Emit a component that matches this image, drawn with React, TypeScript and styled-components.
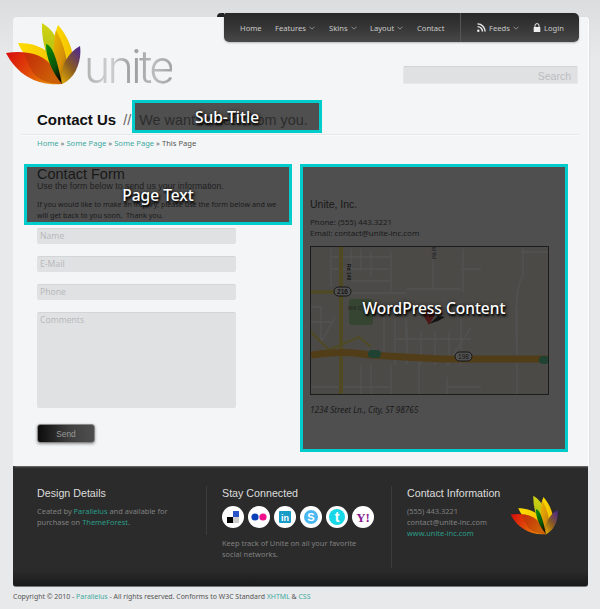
import React from "react";
import styled, { createGlobalStyle } from "styled-components";

const BODY = `"Noto Sans", "Open Sans", sans-serif`;
const HEAD = `"Liberation Sans", Arial, sans-serif`;

const Global = createGlobalStyle`
  html, body { margin: 0; padding: 0; }
  body { background: linear-gradient(#dcddde 0, #e8e9eb 60px); font-family: ${BODY}; width: 600px; height: 609px; overflow: hidden; }
  * { box-sizing: border-box; }
`;

const Page = styled.div`
  width: 575px;
  margin-left: 13px;
  padding-top: 17px;
`;
const Card = styled.main`
  position: relative;
  height: 449px;
  background: #f4f5f7;
  border-radius: 4px 4px 0 0;
  box-shadow: 1px 0 0 #fff, 2px 0 2px #dcdde0;
  display: flex;
  flex-direction: column;
`;
const NavBar = styled.nav`
  position: absolute;
  top: -4px;
  left: 211px;
  width: 355px;
  height: 29px;
  border-radius: 2px 5px 5px 5px;
  background: linear-gradient(#282828 0, #363636 50%, #484848 100%);
  box-shadow: 0 1px 2px rgba(0,0,0,.25);
  display: flex;
  align-items: center;
  padding-left: 16px;
  &::before {
    content: "";
    position: absolute;
    left: -7px;
    top: 0;
    width: 7px;
    height: 4px;
    background: #222;
    border-radius: 4px 0 0 0;
  }
`;
const NavItem = styled.a<{ $w: number }>`
  display: inline-flex;
  align-items: center;
  gap: 3px;
  width: ${p => p.$w}px;
  font-size: 7.6px;
  color: #c9c9c9;
  white-space: nowrap;
`;
const NavDivider = styled.span`
  width: 1px;
  height: 29px;
  background: #555;
  margin-right: 16px;
`;
const Chevron = () => (
  <svg width="6" height="4" viewBox="0 0 6 4"><path d="M.5.7 3 3.2 5.5.7" fill="none" stroke="#999" strokeWidth=".9" /></svg>
);
const Rss = () => (
  <svg width="9" height="9" viewBox="0 0 9 9">
    <circle cx="1.3" cy="7.7" r="1.2" fill="#eee" />
    <path d="M.5 3.6a5 5 0 0 1 5 5M.5 .9a7.7 7.7 0 0 1 7.7 7.7" fill="none" stroke="#eee" strokeWidth="1.4" />
  </svg>
);
const Lock = () => (
  <svg width="8" height="9" viewBox="0 0 8 9">
    <path d="M2 4V2.6a2 2 0 0 1 4 0V4" fill="none" stroke="#eee" strokeWidth="1" />
    <rect x=".7" y="4" width="6.6" height="5" rx=".6" fill="#eee" />
  </svg>
);

const Header = styled.header`
  height: 88px;
  flex: none;
  display: flex;
  justify-content: space-between;
  padding-right: 10px;
`;
const Brand = styled.div`
  display: flex;
  align-items: flex-start;
  margin-left: -8px;
  padding-top: 5px;
`;
const Wordmark = styled.span`
  font-family: Inter, "Liberation Sans", sans-serif;
  font-weight: 300;
  font-size: 44.5px;
  letter-spacing: -2.6px;
  line-height: 1;
  margin: 23px 0 0 3px;
  background: linear-gradient(90deg, #b0b0b0, #d0d0d0 30%, #9c9c9c 55%, #bcbcbc 80%, #a4a4a4);
  -webkit-background-clip: text;
  background-clip: text;
  color: transparent;
`;
const Search = styled.div`
  width: 175px;
  height: 18px;
  margin-top: 49px;
  background: #e0e1e3;
  border: 1px solid #e6e7e9;
  border-top-color: #d2d3d5;
  border-radius: 2px;
  font-family: ${HEAD};
  font-size: 10.5px;
  line-height: 18px;
  color: #bcbdbf;
  text-align: right;
  padding-right: 6px;
`;

const Logo = ({ width }: { width: number }) => (
  <svg width={width} height={width * 0.87} viewBox="5 22 76 66" aria-hidden="true">
    <defs>
      <linearGradient id="r" x1="0" x2="1" y1="0" y2=".4"><stop offset="0" stopColor="#d80c0c" /><stop offset=".55" stopColor="#e04808" /><stop offset="1" stopColor="#e88808" /></linearGradient>
      <linearGradient id="y" x1="0" x2="1"><stop offset="0" stopColor="#ffdc00" /><stop offset="1" stopColor="#f0c000" /></linearGradient>
      <linearGradient id="g" x1="0" x2="0" y1="0" y2="1"><stop offset="0" stopColor="#d4d414" /><stop offset="1" stopColor="#90b010" /></linearGradient>
      <linearGradient id="t" x1="0" x2="1" y1="0" y2="1"><stop offset="0" stopColor="#e8b800" /><stop offset=".6" stopColor="#d89008" /><stop offset="1" stopColor="#806010" /></linearGradient>
      <linearGradient id="p" x1=".8" x2=".2" y1="0" y2="1"><stop offset="0" stopColor="#502a8a" /><stop offset=".55" stopColor="#8a5c20" /><stop offset="1" stopColor="#d8a008" /></linearGradient>
      <linearGradient id="d" x1="0" x2=".5" y1="0" y2="1"><stop offset="0" stopColor="#0a8c0a" /><stop offset=".7" stopColor="#085008" /><stop offset="1" stopColor="#101000" /></linearGradient>
    </defs>
    <path d="M18 43C32 43 46 47 53 58L62 84C44 74 26 62 18 43Z" fill="url(#y)" />
    <path d="M42 23C52 29 58 38 60 50L62 84C50 68 41 45 42 23Z" fill="url(#g)" />
    <path d="M58 25C66 34 72 46 73 58C73 70 68 80 62 84C54 70 50 44 58 25Z" fill="url(#y)" />
    <path d="M56 30C52 46 52 66 62 84C68 72 70 56 56 30Z" fill="url(#t)" />
    <path d="M6 53C26 50 44 54 54 68L62 84C38 86 18 76 6 53Z" fill="url(#r)" />
    <path d="M24 53C40 53 52 62 62 84C52 84 42 82 34 74C30 68 26 60 24 53Z" fill="#a83008" fillOpacity=".45" />
    <path d="M46 44C53 46 57 60 62 84C52 72 46 58 46 44Z" fill="url(#d)" />
    <path d="M80 46C82 60 76 78 62 84C60 68 66 54 80 46Z" fill="url(#p)" />
  </svg>
);

const TitleRow = styled.div`
  height: 30px;
  flex: none;
  margin: 0 10px 0 9px;
  padding-left: 15px;
  display: flex;
  align-items: center;
  gap: 7px;
  border-bottom: 1px solid #e6e7e9;
  box-shadow: 0 1px 0 #fbfbfc;
`;
const PageTitle = styled.h1`
  margin: 0;
  font-family: ${HEAD};
  font-size: 15px;
  font-weight: 700;
  color: #111;
`;
const SubTitle = styled.span`
  font-family: ${HEAD};
  font-size: 14.4px;
  color: #666;
  white-space: nowrap;
`;
const Breadcrumb = styled.div`
  flex: none;
  padding: 2px 0 0 24px;
  height: 29px;
  font-size: 7.6px;
  line-height: 12px;
  color: #555;
`;
const Link = styled.a`
  color: #3eaaa0;
`;
const Columns = styled.div`
  position: relative;
  display: flex;
  padding-left: 24px;
  flex: 1;
`;
const FormColumn = styled.section`
  width: 273px;
  flex: none;
  padding-top: 3px;
`;
const SideColumn = styled.section`
  width: 240px;
  padding-top: 33px;
`;
const H2 = styled.h2`
  margin: 0;
  font-family: ${HEAD};
  font-size: 14.5px;
  font-weight: 400;
  line-height: 14px;
  color: #111;
`;
const Lead = styled.p`
  margin: 0 0 8px;
  font-family: ${HEAD};
  font-size: 8.8px;
  line-height: 10px;
  color: #333;
`;
const Para = styled.p`
  margin: 0 0 7px;
  width: 252px;
  font-size: 7.2px;
  line-height: 11px;
  color: #222;
`;
const Field = styled.div<{ $h?: number; $mb?: number }>`
  width: 199px;
  height: ${p => p.$h ?? 16}px;
  margin-bottom: ${p => p.$mb ?? 12}px;
  background: #e0e1e3;
  border-top: 1px solid #d4d5d7;
  border-radius: 2px;
  padding: 1px 3px;
  font-size: 8.6px;
  line-height: 13px;
  color: #b8b9bb;
`;
const SendButton = styled.button`
  display: block;
  width: 58px;
  height: 19px;
  padding: 0;
  border: 1px solid #888;
  border-radius: 3px;
  background: linear-gradient(90deg, #0c0c0c, #3e3e3e 55%, #4e4e4e);
  box-shadow: 0 1px 3px rgba(0,0,0,.4);
  font-family: ${HEAD};
  font-size: 8.4px;
  color: #9a9a9a;
`;
const SideName = styled.h3`
  margin: 0 0 6px;
  font-family: ${HEAD};
  font-size: 10.5px;
  font-weight: 400;
  line-height: 14px;
  color: #111;
`;
const SideLine = styled.p`
  margin: 0;
  font-size: 7.9px;
  line-height: 11px;
  color: #222;
`;
const Address = styled.p`
  margin: 9px 0 0;
  font-size: 8.2px;
  font-style: italic;
  line-height: 12px;
  color: #222;
`;
const MapFrame = styled.div`
  margin-top: 7px;
  width: 239px;
  height: 149px;
  border: 1px solid #222;
  overflow: hidden;
`;
const roads = [
  "M20 2V40M30 2V24M40 2V24M50 2V24M60 4V30M20 10H80M20 22H78M40 34H80M40 46H95M60 60H95M80 4V44M95 60V92M73 66V110",
  "M122 2V42M122 42H96M122 42H150M152 2V45M150 22H170M240 5H210M212 2V28C205 40 204 60 206 110M206 60V149",
  "M150 55C136 56 120 66 108 70M84 72V118M84 92H160M96 80V118M110 84V118M124 84V118M138 84V118M150 60V118M160 80L136 118",
  "M108 110V149M0 140H80M50 118V149M60 118V149M80 118V149M136 130V149M136 140H170M0 60H10V95L24 70M0 75H20",
];
const MapDrawing = () => (
  <svg width="237" height="147" viewBox="0 0 237 147" style={{ display: "block" }} role="img" aria-label="Street map">
    <rect width="237" height="147" fill="#e4e0d4" />
    <rect x="38" y="52" width="24" height="26" rx="3" fill="#8fce78" />
    <path d={roads.join("")} fill="none" stroke="#fff" strokeWidth="1.4" />
    <path d="M30 0V147" stroke="#f4e040" strokeWidth="4" fill="none" />
    <path d="M0 45H30" stroke="#f4e040" strokeWidth="3.5" fill="none" />
    <path d="M0 85L18 103 48 90 60 100" stroke="#f4e040" strokeWidth="2" fill="none" />
    <path d="M0 108C20 105 40 104 58 108L130 112H237" stroke="#ffaa10" strokeWidth="7" fill="none" />
    <rect x="57" y="103" width="13" height="8" rx="4" fill="#30c080" />
    <rect x="228" y="109" width="10" height="8" rx="4" fill="#30c080" />
    <rect x="144" y="105" width="17" height="9" rx="4.5" fill="#fff" stroke="#000" />
    <text x="152.5" y="112" fontSize="6.5" fontFamily="Liberation Sans" textAnchor="middle" fill="#000">198</text>
    <rect x="23" y="40" width="17" height="9" rx="4.5" fill="#fff" stroke="#000" />
    <text x="31.5" y="47" fontSize="6.5" fontFamily="Liberation Sans" fontWeight="700" textAnchor="middle" fill="#000">216</text>
    <text x="37" y="63" fontSize="5.5" fontFamily="Liberation Sans" fill="#333">Mill C</text>
    <text transform="translate(36 17) rotate(90)" fontSize="5" fontFamily="Liberation Sans" fontWeight="700" fill="#000">Rd 140</text>
    <text transform="translate(121 0) rotate(90)" fontSize="5" fontFamily="Liberation Sans" fill="#000">ld Rd</text>
    <path d="M118 77 127 69 134 70 127 74Z" fill="#000" />
    <path d="M118 78 112 68A6 6 0 1 1 124 68Z" fill="#e81818" />
  </svg>
);

const Callout = styled.div<{ $x: number; $y: number; $w: number; $h: number }>`
  position: absolute;
  left: ${p => p.$x}px;
  top: ${p => p.$y}px;
  width: ${p => p.$w}px;
  height: ${p => p.$h}px;
  border: 3px solid #00cccc;
  background: rgba(26, 26, 26, .76);
  display: flex;
  align-items: center;
  justify-content: center;
  font-size: 15.5px;
  font-weight: 500;
  color: #fff;
  text-shadow: 1px 2px 2px #000, 1px 1px 4px #000;
`;

const Footer = styled.footer`
  height: 121px;
  background: linear-gradient(#3a3a3a 0, #2b2b2b 3px, #2b2b2b 104px, #1a1a1a 120px);
  border-bottom: 1px solid #777;
  border-radius: 0 0 3px 3px;
  padding: 20px 0 0 24px;
  display: flex;
  align-items: flex-start;
`;
const FootCol = styled.div<{ $w: number; $h: number; $last?: boolean }>`
  width: ${p => p.$w}px;
  height: ${p => p.$h}px;
  flex: none;
  margin-right: ${p => (p.$last ? 0 : 15)}px;
  border-right: ${p => (p.$last ? "none" : "1px solid #3c3c3c")};
  position: relative;
`;
const FootHead = styled.h4`
  margin: 0 0 6px;
  font-family: ${HEAD};
  font-size: 10.7px;
  font-weight: 400;
  line-height: 14px;
  color: #ddd;
`;
const FootText = styled.p<{ $w?: number }>`
  margin: 0;
  width: ${p => (p.$w ? `${p.$w}px` : "auto")};
  font-size: 7.45px;
  line-height: 11.2px;
  color: #808080;
`;
const FootLink = styled.a`
  color: #2a9c88;
`;
const Socials = styled.div`
  display: flex;
  gap: 4px;
  margin: 0 0 10px;
`;
const FootLogo = styled.div`
  position: absolute;
  left: 103px;
  top: 9px;
`;
const Copyright = styled.div`
  padding-top: 4px;
  font-size: 6.95px;
  line-height: 12px;
  color: #555;
`;

const Social = ({ children }: { children: React.ReactNode }) => (
  <svg width="22" height="22" viewBox="0 0 22 22">
    <circle cx="11" cy="11" r="11" fill="#fff" />
    {children}
  </svg>
);

export default function App() {
  return (
    <Page>
      <Global />
      <Card>
        <NavBar>
          <NavItem $w={35}>Home</NavItem>
          <NavItem $w={54}>Features <Chevron /></NavItem>
          <NavItem $w={41}>Skins <Chevron /></NavItem>
          <NavItem $w={47}>Layout <Chevron /></NavItem>
          <NavItem $w={43}>Contact</NavItem>
          <NavDivider />
          <NavItem $w={56}><Rss /> Feeds <Chevron /></NavItem>
          <NavItem $w={40}><Lock /> Login</NavItem>
        </NavBar>
        <Header>
          <Brand>
            <Logo width={76} />
            <Wordmark>unite</Wordmark>
          </Brand>
          <Search>Search</Search>
        </Header>
        <TitleRow>
          <PageTitle>Contact Us</PageTitle>
          <SubTitle>// &nbsp;We want to hear from you.</SubTitle>
        </TitleRow>
        <Breadcrumb>
          <Link>Home</Link> » <Link>Some Page</Link> » <Link>Some Page</Link> » This Page
        </Breadcrumb>
        <Columns>
          <FormColumn>
            <H2>Contact Form</H2>
            <Lead>Use the form below to send us your information.</Lead>
            <Para>If you would like to make an inquiry, please use the form below and we will get back to you soon. &nbsp;Thank you.</Para>
            <Field>Name</Field>
            <Field>E-Mail</Field>
            <Field>Phone</Field>
            <Field $h={96} $mb={16}>Comments</Field>
            <SendButton>Send</SendButton>
          </FormColumn>
          <SideColumn>
            <SideName>Unite, Inc.</SideName>
            <SideLine>Phone: (555) 443.3221</SideLine>
            <SideLine>Email: contact@unite-inc.com</SideLine>
            <MapFrame><MapDrawing /></MapFrame>
            <Address>1234 Street Ln., City, ST 98765</Address>
          </SideColumn>
        </Columns>
        <Callout $x={119} $y={83} $w={190} $h={33}>Sub-Title</Callout>
        <Callout $x={11} $y={147} $w={268} $h={61}>Page Text</Callout>
        <Callout $x={287} $y={147} $w={268} $h={288}>WordPress Content</Callout>
      </Card>
      <Footer>
        <FootCol $w={170} $h={49}>
          <FootHead>Design Details</FootHead>
          <FootText $w={140}>Ceated by <FootLink>Parallelus</FootLink> and available for purchase on <FootLink>ThemeForest</FootLink>.</FootText>
        </FootCol>
        <FootCol $w={170} $h={82}>
          <FootHead>Stay Connected</FootHead>
          <Socials>
            <Social><rect x="5" y="11" width="6" height="6" fill="#000" /><rect x="11" y="5" width="6" height="6" fill="#2a54c8" /><rect x="11" y="11" width="6" height="6" fill="#ccc" /></Social>
            <Social><circle cx="7" cy="11" r="3.6" fill="#0a40b8" /><circle cx="15" cy="11" r="3.6" fill="#f0108c" /></Social>
            <Social><rect x="5" y="5" width="12" height="12" rx="1" fill="#1a9cc8" /><text x="11" y="14.5" fontSize="9" fontWeight="700" fontFamily="Liberation Sans" textAnchor="middle" fill="#fff">in</text></Social>
            <Social><circle cx="11" cy="11" r="7" fill="#4ab8f0" /><text x="11" y="15" fontSize="11" fontWeight="700" fontFamily="Liberation Sans" textAnchor="middle" fill="#fff">S</text></Social>
            <Social><circle cx="11" cy="11" r="8" fill="#18d8e8" /><text x="11" y="16" fontSize="14" fontWeight="700" fontFamily="Liberation Sans" textAnchor="middle" fill="#fff">t</text></Social>
            <Social><text x="11" y="15.5" fontSize="13" fontWeight="700" fontFamily="Liberation Serif" textAnchor="middle" fill="#8a1a90">Y!</text></Social>
          </Socials>
          <FootText $w={150}>Keep track of Unite on all your favorite social networks.</FootText>
        </FootCol>
        <FootCol $w={160} $h={82} $last>
          <FootHead>Contact Information</FootHead>
          <FootText>(555) 443.3221</FootText>
          <FootText>contact@unite-inc.com</FootText>
          <FootText><FootLink>www.unite-inc.com</FootLink></FootText>
          <FootLogo><Logo width={48} /></FootLogo>
        </FootCol>
      </Footer>
      <Copyright>
        Copyright © 2010 - <Link>Parallelus</Link> - All rights reserved. Conforms to W3C Standard <Link>XHTML</Link> &amp; <Link>CSS</Link>
      </Copyright>
    </Page>
  );
}
